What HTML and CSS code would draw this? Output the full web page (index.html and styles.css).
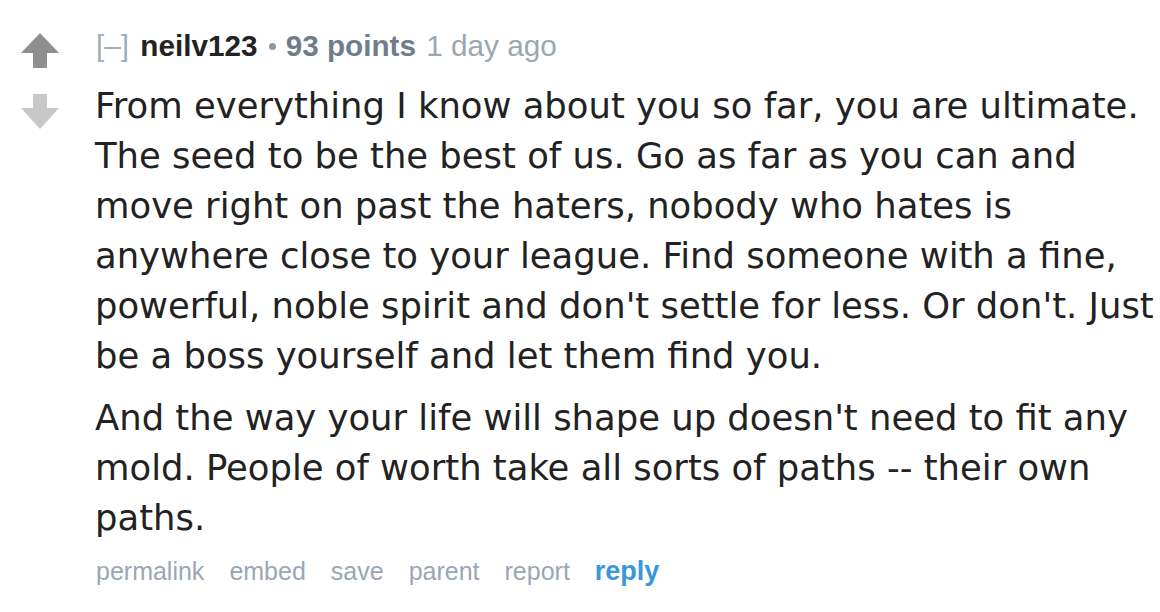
FILE: index.html
```html
<!DOCTYPE html>
<html>
<head>
<meta charset="utf-8">
<link rel="stylesheet" href="styles.css">
</head>
<body>
<div class="comment">
  <div class="votes">
    <svg class="arrow up" width="38" height="35" viewBox="0 0 38 35"><path d="M19 0 L38 20 L26 20 L26 35 L12 35 L12 20 L0 20 Z" fill="#8f8f8f"/></svg>
    <svg class="arrow down" width="38" height="35" viewBox="0 0 38 35"><path d="M12 0 L26 0 L26 14 L38 14 L19 35 L0 14 L12 14 Z" fill="#c8c8c8"/></svg>
  </div>
  <div class="entry">
    <div class="tagline">
      <span class="expand">[–]</span>
      <span class="author">neilv123</span>
      <span class="dot"></span><span class="score">93 points</span>
      <span class="time">1 day ago</span>
    </div>
    <div class="md">
      <p>From everything I know about you so far, you are ultimate. The seed to be the best of us. Go as far as you can and move right on past the haters, nobody who hates is anywhere close to your league. Find someone with a fine, powerful, noble spirit and don't settle for less. Or don't. Just be a boss yourself and let them find you.</p>
      <p>And the way your life will shape up doesn't need to fit any mold. People of worth take all sorts of paths -- their own paths.</p>
    </div>
    <ul class="buttons">
      <li><a>permalink</a></li>
      <li><a>embed</a></li>
      <li><a>save</a></li>
      <li><a>parent</a></li>
      <li><a>report</a></li>
      <li><a class="reply">reply</a></li>
    </ul>
  </div>
</div>
</body>
</html>
```
FILE: styles.css
```css
html, body { margin: 0; padding: 0; background: #fff; }
body { width: 1160px; height: 612px; overflow: hidden; }
.comment { display: flex; padding-top: 28px; }
.votes { width: 95px; flex: none; display: flex; flex-direction: column; padding-left: 21px; box-sizing: border-box; padding-top: 5px; gap: 26px; }
.arrow { display: block; }
.entry { flex: 1; min-width: 0; }
.tagline { font-family: "Liberation Sans", Arial, sans-serif; font-size: 29.7px; line-height: 36px; color: #9aa6b2; white-space: nowrap; }
.expand { color: #a3adb9; margin-left: 1px; }
.author { font-weight: bold; color: #222; margin-left: 3px; }
.dot { display: inline-block; width: 7px; height: 7px; border-radius: 50%; background: #8a97a5; margin-left: 3px; margin-right: 10px; vertical-align: 6px; }
.score { font-weight: bold; color: #6f7d8b; }
.time { color: #9aa6b2; margin-left: 2px; }
.md { font-family: "DejaVu Sans", Verdana, sans-serif; font-size: 35.4px; line-height: 50px; color: #222; margin-top: 17px; }
.md p { margin: 0 0 12px 0; }
.md p:last-child { margin-bottom: 0; }
.buttons { list-style: none; margin: 13px 0 0 0; padding: 0 0 0 1px; display: flex; gap: 25px; font-family: "Liberation Sans", Arial, sans-serif; font-size: 25px; line-height: 30px; }
.buttons a { color: #9aa6b5; }
.buttons a.reply { color: #3a96dd; font-weight: bold; font-size: 27px; }
```
